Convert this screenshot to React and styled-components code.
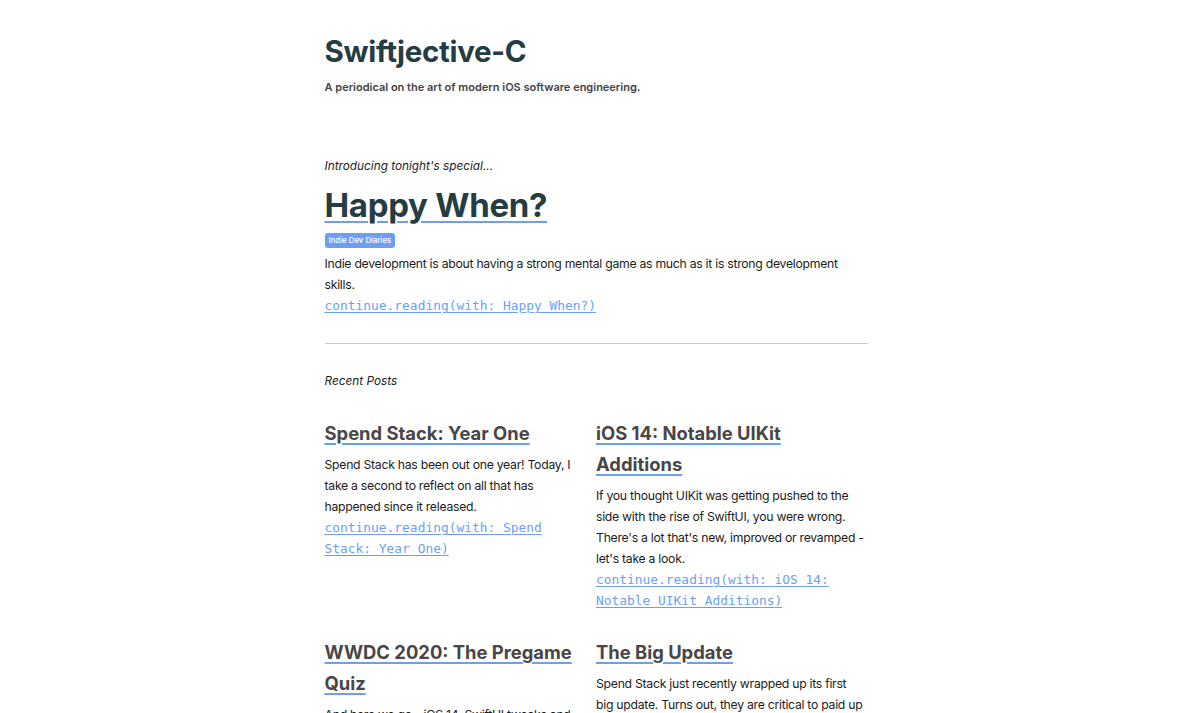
import React from "react";
import styled, { createGlobalStyle } from "styled-components";

const Global = createGlobalStyle`
  html, body {
    margin: 0;
    padding: 0;
    background: #ffffff;
  }
  body {
    font-family: Inter, "Noto Sans", sans-serif;
    color: #1f1f1f;
    padding-right: 4px;
    -webkit-font-smoothing: antialiased;
  }
`;

const Page = styled.main`
  width: 543px;
  margin: 0 auto;
  padding: 32px 0 40px;
`;

const SiteTitle = styled.h1`
  margin: 0;
  font-size: 29.5px;
  line-height: 38px;
  font-weight: 700;
  color: #243c42;
  letter-spacing: -0.3px;
`;

const Tagline = styled.p`
  margin: 8px 0 0;
  font-size: 11px;
  line-height: 18px;
  font-weight: 600;
  color: #444244;
`;

const Kicker = styled.p`
  margin: ${(p) => p.$top || 0}px 0 0;
  font-size: 11.8px;
  line-height: 20px;
  font-style: italic;
  color: #222;
`;

const TitleLink = styled.a`
  color: inherit;
  text-decoration: underline;
  text-decoration-color: #6c9ff4;
  text-decoration-thickness: 2px;
  text-underline-offset: ${(p) => p.$offset || 3}px;
`;

const Feature = styled.h2`
  margin: 7px 0 0;
  font-size: 33px;
  line-height: 44px;
  font-weight: 700;
  color: #243c42;
  letter-spacing: -0.3px;
`;

const Badge = styled.span`
  display: inline-block;
  margin-top: 4px;
  padding: 0 4px;
  height: 15px;
  line-height: 15px;
  font-size: 7.8px;
  font-weight: 500;
  color: #fff;
  background: #6c9ff4;
  border-radius: 3px;
`;

const Body = styled.p`
  margin: ${(p) => p.$top || 0}px 0 0;
  font-size: 12.25px;
  line-height: 21px;
  letter-spacing: -0.28px;
  color: #1c1c1c;
`;

const ReadMore = styled.a`
  display: block;
  font-family: "DejaVu Sans Mono", "Liberation Mono", monospace;
  font-size: 12.9px;
  line-height: 21px;
  color: #6c9ff4;
  text-decoration: underline;
  text-underline-offset: 2px;
`;

const Rule = styled.hr`
  margin: 27px 0 0;
  border: 0;
  border-top: 1.5px solid #c8c8c8;
`;

const Grid = styled.section`
  display: grid;
  grid-template-columns: 1fr 1fr;
  column-gap: 0;
  margin-top: 27px;
`;

const Post = styled.article`
  padding-right: 1px;
  margin-bottom: 26px;

  &:nth-child(odd) {
    padding-right: 14px;
  }
`;

const PostTitle = styled.h3`
  margin: 0 0 5px;
  font-size: 18.4px;
  line-height: 31px;
  font-weight: 700;
  color: #4a4646;
`;

const posts = [
  {
    title: "Spend Stack: Year One",
    body: "Spend Stack has been out one year! Today, I take a second to reflect on all that has happened since it released.",
  },
  {
    title: "iOS 14: Notable UIKit Additions",
    body: "If you thought UIKit was getting pushed to the side with the rise of SwiftUI, you were wrong. There's a lot that's new, improved or revamped - let's take a look.",
  },
  {
    title: "WWDC 2020: The Pregame Quiz",
    body: "And here we go - iOS 14, SwiftUI tweaks and more. Let's see how well you know what's coming before it gets here.",
  },
  {
    title: "The Big Update",
    body: "Spend Stack just recently wrapped up its first big update. Turns out, they are critical to paid up front apps.",
  },
];

export default function App() {
  return (
    <>
      <Global />
      <Page>
        <SiteTitle>Swiftjective-C</SiteTitle>
        <Tagline>A periodical on the art of modern iOS software engineering.</Tagline>

        <Kicker $top={60}>Introducing tonight's special...</Kicker>
        <Feature>
          <TitleLink href="#" $offset={4}>Happy When?</TitleLink>
        </Feature>
        <Badge>Indie Dev Diaries</Badge>
        <Body $top={5}>
          Indie development is about having a strong mental game as much as it is strong development skills.
        </Body>
        <ReadMore href="#">continue.reading(with: Happy When?)</ReadMore>

        <Rule />

        <Kicker $top={27}>Recent Posts</Kicker>
        <Grid>
          {posts.map((p) => (
            <Post key={p.title}>
              <PostTitle>
                <TitleLink href="#">{p.title}</TitleLink>
              </PostTitle>
              <Body>{p.body}</Body>
              <ReadMore href="#">continue.reading(with: {p.title})</ReadMore>
            </Post>
          ))}
        </Grid>
      </Page>
    </>
  );
}
